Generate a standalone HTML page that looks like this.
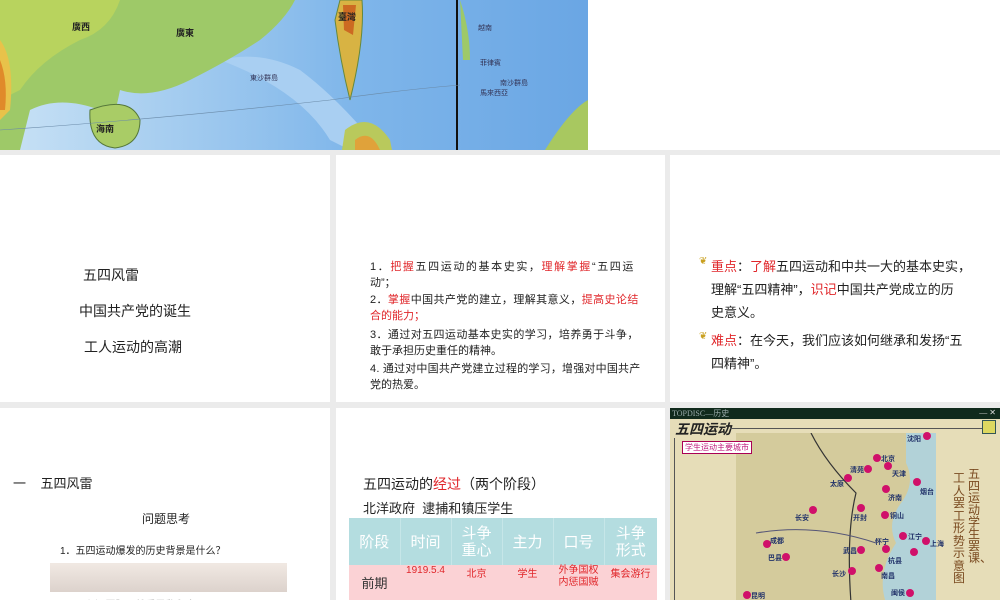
<!DOCTYPE html>
<html><head><meta charset="utf-8"><style>
*{margin:0;padding:0;box-sizing:border-box}
body{width:1000px;height:600px;overflow:hidden;background:#ebebeb;position:relative;font-family:"Liberation Sans","Noto Sans CJK SC",sans-serif;color:#222}
.p{position:absolute;background:#fff;overflow:hidden}
.t{position:absolute;white-space:nowrap}
.r{color:#e0262a}
table{border-collapse:collapse}
</style></head><body>
<div class="p" style="left:0;top:0;width:588px;height:150px;background:#8ec3ec">
<svg width="588" height="150" viewBox="0 0 588 150">
<defs><linearGradient id="sea" x1="0" y1="0" x2="1" y2="0"><stop offset="0" stop-color="#c9e2f5"/><stop offset="0.6" stop-color="#7fb6ea"/><stop offset="1" stop-color="#6aa6e4"/></linearGradient></defs>
<rect width="588" height="150" fill="url(#sea)"/>
<path d="M220 60 Q300 90 330 140 L350 150 L380 150 Q340 100 300 70 Q260 50 220 60Z" fill="#a9cff2"/>
<path d="M0 0 L295 0 Q285 20 260 40 Q230 60 190 80 Q150 100 120 90 Q115 115 110 130 L100 110 Q60 95 30 110 L20 150 L0 150Z" fill="#9ec968"/>
<path d="M0 0 L120 0 Q110 30 80 40 Q40 60 20 90 L0 100Z" fill="#b8d35e"/>
<path d="M0 40 Q15 60 10 110 L0 120Z" fill="#e8c24a"/>
<path d="M0 60 Q8 80 5 110 L0 110Z" fill="#e08a2a"/>
<path d="M90 110 Q130 95 140 120 Q140 145 115 148 Q88 145 90 110Z" fill="#a9cc66" stroke="#55773a" stroke-width="1"/>
<path d="M340 0 L362 0 Q365 40 350 100 Q340 60 335 20Z" fill="#d8b343" stroke="#66883a"/>
<path d="M343 5 L356 5 L353 35 L344 30Z" fill="#cc6a22"/>
<path d="M345 130 Q370 110 390 140 L392 150 L342 150Z" fill="#b9c95c"/>
<path d="M355 140 Q370 128 380 150 L355 150Z" fill="#e0a23a"/>
<rect x="456" y="0" width="2" height="150" fill="#111"/>
<path d="M545 150 Q570 110 588 100 L588 150Z" fill="#a8c860"/>
<path d="M460 0 Q470 30 470 60 L463 60 Z" fill="#9ec968"/>
<path d="M0 130 Q150 120 330 100 Q400 90 460 85" stroke="#6a8aa8" fill="none" stroke-width=".6"/>
<g font-size="9" font-weight="bold" fill="#222"><text x="72" y="30">廣西</text><text x="176" y="36">廣東</text><text x="96" y="132">海南</text><text x="338" y="20">臺灣</text></g>
<g font-size="7" fill="#335"><text x="480" y="95">馬來西亞</text><text x="480" y="65">菲律賓</text><text x="478" y="30">越南</text><text x="250" y="80">東沙群島</text><text x="500" y="85">南沙群島</text></g>
</svg></div>
<div class="p" style="left:588px;top:0;width:412px;height:150px"></div>

<div class="p" style="left:0;top:155px;width:330px;height:247px">
<div class="t" style="left:83px;top:110px;font-size:14px">五四风雷</div>
<div class="t" style="left:79px;top:146px;font-size:14px">中国共产党的诞生</div>
<div class="t" style="left:84px;top:182px;font-size:14px">工人运动的高潮</div>
</div>
<div class="p" style="left:336px;top:155px;width:329px;height:247px;font-size:11px;line-height:16px">
<div class="t" style="left:34px;top:104px;letter-spacing:1.6px">1．<span class="r">把握</span>五四运动的基本史实，<span class="r">理解掌握</span>“五四运</div>
<div class="t" style="left:34px;top:120px">动”；</div>
<div class="t" style="left:34px;top:137px;letter-spacing:0.4px">2．<span class="r">掌握</span>中国共产党的建立，理解其意义，<span class="r">提高史论结</span></div>
<div class="t r" style="left:34px;top:153px">合的能力；</div>
<div class="t" style="left:34px;top:172px;letter-spacing:0.4px">3．通过对五四运动基本史实的学习，培养勇于斗争，</div>
<div class="t" style="left:34px;top:188px">敢于承担历史重任的精神。</div>
<div class="t" style="left:34px;top:206px;letter-spacing:0.2px">4. 通过对中国共产党建立过程的学习，增强对中国共产</div>
<div class="t" style="left:34px;top:222px">党的热爱。</div>
</div>
<div class="p" style="left:670px;top:155px;width:330px;height:247px;font-size:13px">
<div class="t" style="left:29px;top:101px;color:#c9a020;font-size:10px">❦</div>
<div class="t" style="left:41px;top:101px"><span class="r">重点</span>：<span class="r">了解</span>五四运动和中共一大的基本史实，</div>
<div class="t" style="left:41px;top:124px">理解“五四精神”，<span class="r">识记</span>中国共产党成立的历</div>
<div class="t" style="left:41px;top:147px">史意义。</div>
<div class="t" style="left:29px;top:176px;color:#c9a020;font-size:10px">❦</div>
<div class="t" style="left:41px;top:175px"><span class="r">难点</span>：在今天，我们应该如何继承和发扬“五</div>
<div class="t" style="left:41px;top:198px">四精神”。</div>
</div>

<div class="p" style="left:0;top:408px;width:330px;height:192px">
<div class="t" style="left:13px;top:65px;font-size:13px">一&nbsp;&nbsp;&nbsp;&nbsp;五四风雷</div>
<div class="t" style="left:142px;top:102px;font-size:12px">问题思考</div>
<div class="t" style="left:60px;top:134px;font-size:10px">1．五四运动爆发的历史背景是什么？</div>
<div style="position:absolute;left:50px;top:155px;width:237px;height:29px;background:linear-gradient(#f1e9e3,#dcd2cc)"></div>
<div class="t" style="left:80px;top:188px;font-size:10px;color:#bbb">（1）国际：战后巴黎和会</div>
</div>
<div class="p" style="left:336px;top:408px;width:329px;height:192px">
<div class="t" style="left:27px;top:66px;font-size:14px">五四运动的<span class="r">经过</span>（两个阶段）</div>
<div class="t" style="left:27px;top:90px;font-size:13px">北洋政府&nbsp;&nbsp;逮捕和镇压学生</div>
<table style="position:absolute;left:13px;top:110px;width:308px;font-size:15px;color:#fff;text-align:center">
<tr style="background:#b4dde0;height:47px"><td style="width:51px;border-right:1px solid #c6e6e8">阶段</td><td style="width:51px;border-right:1px solid #c6e6e8">时间</td><td style="width:51px;border-right:1px solid #c6e6e8;line-height:17px">斗争<br>重心</td><td style="width:51px;border-right:1px solid #c6e6e8">主力</td><td style="width:51px;border-right:1px solid #c6e6e8">口号</td><td style="line-height:17px">斗争<br>形式</td></tr>
<tr style="background:#fbd2d5;height:35px;font-size:10px;color:#e0262a;vertical-align:top"><td style="color:#333;font-size:13px;vertical-align:middle">前期</td><td>1919.5.4</td><td>北京</td><td>学生</td><td style="line-height:12px">外争国权<br>内惩国贼</td><td>集会游行</td></tr>
</table>
</div>
<div class="p" style="left:670px;top:408px;width:330px;height:192px;background:#e6ddb8">
<div style="position:absolute;left:0;top:0;width:330px;height:11px;background:#102a1c;color:#9aa;font-size:8px;font-family:'Liberation Serif',serif;padding-left:2px">TOPDISC—历史<span style="float:right;color:#ddd;padding-right:4px">— ✕</span></div>
<div class="t" style="left:5px;top:11px;font-size:14px;font-weight:bold;font-style:italic;color:#222">五四运动</div>
<div style="position:absolute;left:60px;top:20px;width:255px;height:1px;background:#555"></div>
<div style="position:absolute;left:4px;top:30px;width:1px;height:165px;background:#555"></div>
<div style="position:absolute;left:312px;top:12px;width:14px;height:14px;background:#ddd860;border:1px solid #355"></div>
<div style="position:absolute;left:66px;top:25px;width:200px;height:170px;background:#d4cb9c"></div>
<svg style="position:absolute;left:66px;top:25px" width="200" height="170"><path d="M170 0 L200 0 L200 170 L150 170 Q140 140 160 110 Q150 90 165 70 Q180 50 170 30Z" fill="#b2d2d8"/><path d="M75 0 Q90 30 120 60 Q110 100 115 170" stroke="#333" fill="none" stroke-width="1.2"/><path d="M20 100 Q80 90 140 110" stroke="#557" fill="none"/></svg>
<div class="t" style="left:12px;top:33px;font-size:8px;color:#c02080;background:#fff;border:1px solid #a05;padding:0 2px">学生运动主要城市</div>
<div class="t" style="left:298px;top:60px;font-size:12px;line-height:12px;color:#7a4a20;width:13px;white-space:normal">五四运动学生罢课、</div>
<div class="t" style="left:283px;top:64px;font-size:12px;line-height:12.5px;color:#7a4a20;width:13px;white-space:normal">工人罢工形势示意图</div>
<svg style="position:absolute;left:0;top:0" width="330" height="192" font-size="7" font-weight="bold">
<g fill="#d0106a"><circle cx="257" cy="28" r="4"/><circle cx="207" cy="50" r="4"/><circle cx="198" cy="61" r="4"/><circle cx="218" cy="58" r="4"/><circle cx="178" cy="70" r="4"/><circle cx="247" cy="74" r="4"/><circle cx="216" cy="81" r="4"/><circle cx="143" cy="102" r="4"/><circle cx="191" cy="100" r="4"/><circle cx="215" cy="107" r="4"/><circle cx="233" cy="128" r="4"/><circle cx="256" cy="133" r="4"/><circle cx="97" cy="136" r="4"/><circle cx="216" cy="141" r="4"/><circle cx="191" cy="142" r="4"/><circle cx="244" cy="144" r="4"/><circle cx="116" cy="149" r="4"/><circle cx="182" cy="163" r="4"/><circle cx="209" cy="160" r="4"/><circle cx="240" cy="185" r="4"/><circle cx="77" cy="187" r="4"/></g>
<g fill="#22336a"><text x="237" y="33">沈阳</text><text x="211" y="53">北京</text><text x="180" y="64">清苑</text><text x="222" y="68">天津</text><text x="160" y="78">太原</text><text x="250" y="86">烟台</text><text x="218" y="92">济南</text><text x="125" y="112">长安</text><text x="183" y="112">开封</text><text x="220" y="110">铜山</text><text x="238" y="131">江宁</text><text x="260" y="138">上海</text><text x="100" y="135">成都</text><text x="218" y="155">杭县</text><text x="173" y="145">武昌</text><text x="205" y="136">怀宁</text><text x="98" y="152">巴县</text><text x="162" y="168">长沙</text><text x="211" y="170">南昌</text><text x="221" y="187">闽侯</text><text x="81" y="190">昆明</text></g>
</svg>
</div>
</body></html>
